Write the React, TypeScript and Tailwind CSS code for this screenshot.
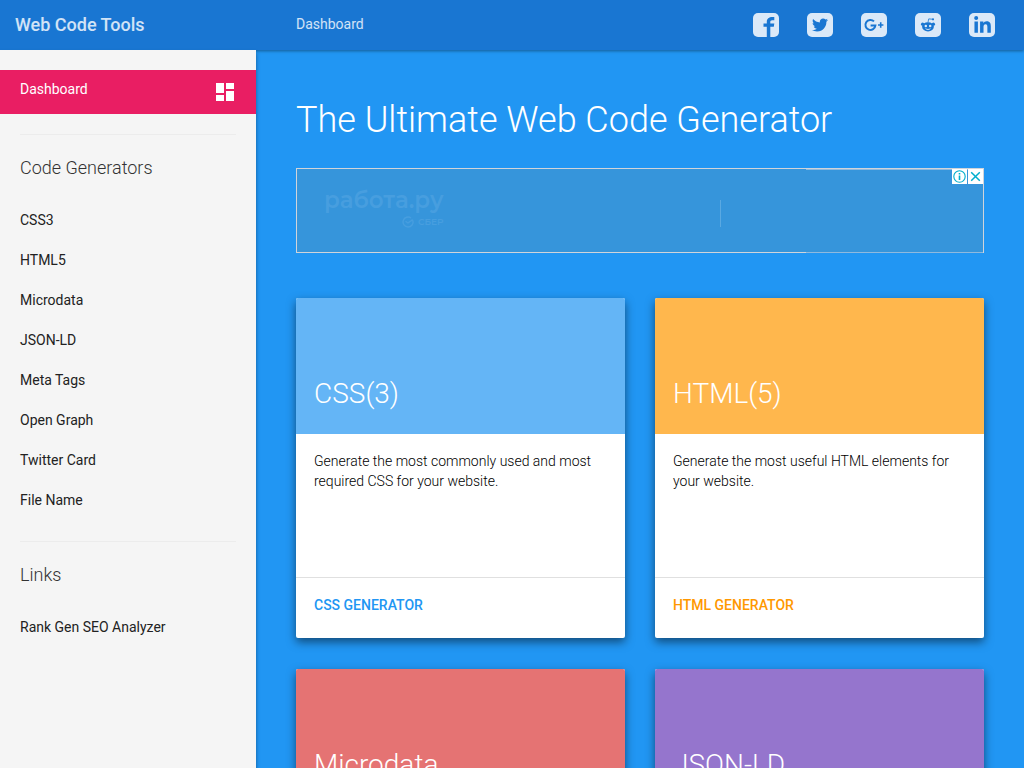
import type { ReactNode } from "react";
import { FaLinkedinIn, FaTwitter } from "react-icons/fa";
import { MdDashboard } from "react-icons/md";

const generators = [
  "CSS3",
  "HTML5",
  "Microdata",
  "JSON-LD",
  "Meta Tags",
  "Open Graph",
  "Twitter Card",
  "File Name",
];

const cards = [
  {
    title: "CSS(3)",
    text: "Generate the most commonly used and most required CSS for your website.",
    action: "CSS Generator",
    bg: "bg-[#64b5f6]",
    link: "text-[#2196f3]",
  },
  {
    title: "HTML(5)",
    text: "Generate the most useful HTML elements for your website.",
    action: "HTML Generator",
    bg: "bg-[#ffb74d]",
    link: "text-[#ff9800]",
  },
  {
    title: "Microdata",
    text: "",
    action: "",
    bg: "bg-[#e57373]",
    link: "text-[#f44336]",
  },
  {
    title: "JSON-LD",
    text: "",
    action: "",
    bg: "bg-[#9575cd]",
    link: "text-[#673ab7]",
  },
];

function SocialLink({ label, children }: { label: string; children: ReactNode }) {
  return (
    <a
      href="#"
      aria-label={label}
      className="flex h-6 w-[26px] items-center justify-center overflow-hidden rounded-[5px] bg-[#dbe9f8] text-[#1976d2]"
    >
      {children}
    </a>
  );
}

function FacebookGlyph() {
  return (
    <svg viewBox="0 0 26 24" className="h-6 w-[26px]" fill="currentColor">
      <path d="M17.3 24V13.8h3.5l.5-3.2h-4V9c0-1.1.5-1.8 1.9-1.8h2.1V4.1c-.5-.1-1.2-.1-2-.1-3.3 0-5.5 1.7-5.5 4.8v1.8h-3.3v3.2h3.3V24z" />
    </svg>
  );
}

function GooglePlusGlyph() {
  return (
    <svg viewBox="0 0 26 24" className="h-6 w-[26px]" fill="none" stroke="currentColor">
      <path d="M13 8.4A5 5 0 1 0 14.4 12.4H9.6" strokeWidth="2" />
      <path d="M17 12h5.4M19.7 9.3v5.4" strokeWidth="1.6" />
    </svg>
  );
}

function RedditGlyph() {
  return (
    <svg viewBox="0 0 26 24" className="h-6 w-[26px]" fill="currentColor">
      <circle cx="7.6" cy="11.2" r="1.6" />
      <circle cx="18.4" cy="11.2" r="1.6" />
      <ellipse cx="13" cy="13.8" rx="5.9" ry="4.6" />
      <path d="M13 9.4 13.7 5.9 17.4 6.2" fill="none" stroke="currentColor" strokeWidth="0.8" />
      <circle cx="18" cy="6.3" r="1.1" />
      <circle cx="10.8" cy="12.9" r="1.25" className="fill-[#dbe9f8]" />
      <circle cx="15.2" cy="12.9" r="1.25" className="fill-[#dbe9f8]" />
      <path d="M10.6 15.6c1.3 1.2 3.5 1.2 4.8 0" fill="none" className="stroke-[#dbe9f8]" strokeWidth="0.9" />
    </svg>
  );
}

function NavItem({ label }: { label: string }) {
  return (
    <li>
      <a href="#" className="block px-5 text-sm leading-10 text-[#222]">
        {label}
      </a>
    </li>
  );
}

function Header() {
  return (
    <header className="sticky top-0 z-10 flex h-[50px] items-center bg-[#1976d2] text-white/80 shadow-[0_1px_3px_rgba(0,0,0,0.4)]">
      <a href="#" className="w-64 shrink-0 pl-[15px] text-lg font-medium">
        Web Code Tools
      </a>
      <nav className="flex grow items-center justify-between pr-[29px] pl-10">
        <a href="#" className="pb-0.5 text-sm">
          Dashboard
        </a>
        <div className="flex gap-7">
          <SocialLink label="Facebook">
            <FacebookGlyph />
          </SocialLink>
          <SocialLink label="Twitter">
            <FaTwitter size={16} />
          </SocialLink>
          <SocialLink label="Google Plus">
            <GooglePlusGlyph />
          </SocialLink>
          <SocialLink label="Reddit">
            <RedditGlyph />
          </SocialLink>
          <SocialLink label="LinkedIn">
            <FaLinkedinIn size={19} />
          </SocialLink>
        </div>
      </nav>
    </header>
  );
}

function Sidebar() {
  return (
    <aside className="sticky top-[50px] z-10 h-[calc(100vh-50px)] w-64 shrink-0 overflow-hidden bg-[#f5f5f5] pt-5 shadow-[0_3px_4px_rgba(0,0,0,0.4)]">
      <a href="#" className="flex h-11 items-center justify-between bg-[#e91e63] px-5 text-sm text-white">
        <span className="pb-1.5">Dashboard</span>
        <MdDashboard size={24} className="-mr-px" />
      </a>
      <hr className="mx-5 mt-5 border-[#ececec]" />
      <h2 className="mt-[19px] px-5 text-lg leading-7 font-light text-[#333]">Code Generators</h2>
      <ul className="mt-[18px]">
        {generators.map((name) => (
          <NavItem key={name} label={name} />
        ))}
      </ul>
      <hr className="mx-5 mt-[21px] border-[#ececec]" />
      <h2 className="mt-[19px] px-5 text-lg leading-7 font-light text-[#333]">Links</h2>
      <ul className="mt-[18px]">
        <NavItem label="Rank Gen SEO Analyzer" />
      </ul>
    </aside>
  );
}

function AdBanner() {
  return (
    <div className="relative mt-6 flex h-[85px] items-start border border-[#d0d4da] bg-[#3695db] px-[27px]">
      <div className="flex flex-col items-end pt-[15px] font-['Montserrat','Noto_Sans',sans-serif] text-[#479edf]">
        <span className="text-[23px] leading-8 font-semibold">работа.ру</span>
        <span className="flex items-center gap-1 text-[9px] leading-3 font-semibold">
          <svg viewBox="0 0 12 12" className="size-3" fill="none" stroke="currentColor" strokeWidth="1.4">
            <path d="M10.8 4.5A5 5 0 1 1 9 2M3.5 5.2 6 7l4.7-3.4" />
          </svg>
          СБЕР
        </span>
      </div>
      <div className="absolute top-[31px] left-[61.6%] h-[27px] w-px bg-[#5aa9e2]" />
      <div className="absolute top-0 right-0 left-[74.2%] h-px bg-[#8fb9de]" />
      <div className="absolute right-0 -bottom-px left-[74.2%] h-px bg-[#8fb9de]" />
      <div className="absolute top-0 right-0 flex gap-px">
        <button type="button" aria-label="Ad information" className="flex size-[15px] items-center justify-center bg-white text-[#00aecd]">
          <svg viewBox="0 0 15 15" className="size-[15px]" fill="none" stroke="currentColor">
            <circle cx="7.5" cy="7.5" r="5.7" strokeWidth="1.1" />
            <path d="M7.5 6.5V11M7.5 4V5.5" strokeWidth="1.6" />
          </svg>
        </button>
        <button type="button" aria-label="Close ad" className="flex size-[15px] items-center justify-center bg-white text-[#00aecd]">
          <svg viewBox="0 0 15 15" className="size-[15px]" fill="none" stroke="currentColor">
            <path d="M3.2 3.2 11.8 11.8M11.8 3.2 3.2 11.8" strokeWidth="1.5" />
          </svg>
        </button>
      </div>
    </div>
  );
}

export default function App() {
  return (
    <div className="min-h-screen bg-[#2196f3] font-['Roboto',sans-serif]">
      <Header />
      <div className="flex items-start">
        <Sidebar />
        <main className="min-w-0 grow px-10 pt-[46px] pb-8">
          <h1 className="text-4xl leading-[48px] font-light text-white">The Ultimate Web Code Generator</h1>
          <AdBanner />
          <div className="mt-[45px] grid grid-cols-2 gap-x-[30px] gap-y-[31px]">
            {cards.map((card) => (
              <article
                key={card.title}
                className="flex h-[340px] flex-col overflow-hidden rounded-[2px] bg-white shadow-[0_4px_10px_rgba(0,0,0,0.5)]"
              >
                <h2 className={`flex h-[136px] items-end px-[18px] pb-5 text-[28px] leading-10 font-light text-white ${card.bg}`}>
                  {card.title}
                </h2>
                <p className="grow px-[18px] pt-[17px] text-sm leading-5 font-light text-black">{card.text}</p>
                <div className="flex h-[61px] items-start border-t border-[#e0e0e0] px-[18px] pt-[17px]">
                  <a href="#" className={`text-sm leading-5 font-medium uppercase ${card.link}`}>
                    {card.action}
                  </a>
                </div>
              </article>
            ))}
          </div>
        </main>
      </div>
    </div>
  );
}
